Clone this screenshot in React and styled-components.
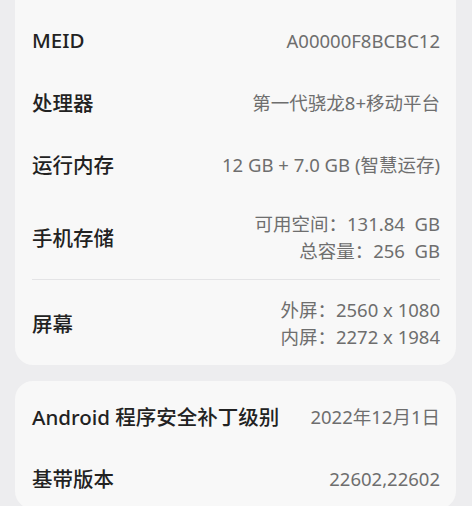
import React from 'react'
import styled, { createGlobalStyle } from 'styled-components'

const GlobalStyle = createGlobalStyle`
  html, body {
    margin: 0;
    padding: 0;
    background: #ededef;
  }
  body {
    font-family: 'Noto Sans', 'Noto Sans CJK SC', sans-serif;
    -webkit-font-smoothing: antialiased;
  }
`

const Page = styled.div`
  display: flex;
  flex-direction: column;
  gap: 16px;
  padding: 0 16px 0 15px;
  height: 506px;
  overflow: hidden;
`

const Card = styled.section`
  background: #f8f8f8;
  border-radius: ${p => (p.$flatTop ? '0 0 18px 18px' : '18px')};
  padding: ${p => p.$padTop}px 16px 0 17px;
  flex-shrink: 0;
`

const Row = styled.div`
  display: flex;
  align-items: center;
  justify-content: space-between;
  min-height: ${p => p.$height || 62}px;
  border-top: ${p => (p.$divider ? '1px solid #e4e4e6' : 'none')};
  gap: 12px;
`

const Label = styled.div`
  font-size: 20.5px;
  font-weight: 500;
  color: #222;
  white-space: nowrap;
`

const Value = styled.div`
  display: flex;
  flex-direction: column;
  align-items: flex-end;
  font-size: 18.5px;
  line-height: 27px;
  color: #6e6e6e;
  text-align: right;
  white-space: pre;
`

const firstCard = [
  { label: 'MEID', value: ['A00000F8BCBC12'] },
  { label: '处理器', value: ['第一代骁龙8+移动平台'] },
  { label: '运行内存', value: ['12 GB + 7.0 GB (智慧运存)'] },
  { label: '手机存储', value: ['可用空间：131.84  GB', '总容量：256  GB'], height: 84 },
  { label: '屏幕', value: ['外屏：2560 x 1080', '内屏：2272 x 1984'], height: 85, divider: true }
]

const secondCard = [
  { label: 'Android 程序安全补丁级别', value: ['2022年12月1日'] },
  { label: '基带版本', value: ['22602,22602'] }
]

const InfoRow = ({ item }) => (
  <Row $height={item.height} $divider={item.divider}>
    <Label>{item.label}</Label>
    <Value>
      {item.value.map(line => (
        <span key={line}>{line}</span>
      ))}
    </Value>
  </Row>
)

export default function App() {
  return (
    <>
      <GlobalStyle />
      <Page>
        <Card $flatTop $padTop={9}>
          {firstCard.map(item => (
            <InfoRow key={item.label} item={item} />
          ))}
        </Card>
        <Card $padTop={4}>
          {secondCard.map(item => (
            <InfoRow key={item.label} item={item} />
          ))}
        </Card>
      </Page>
    </>
  )
}
